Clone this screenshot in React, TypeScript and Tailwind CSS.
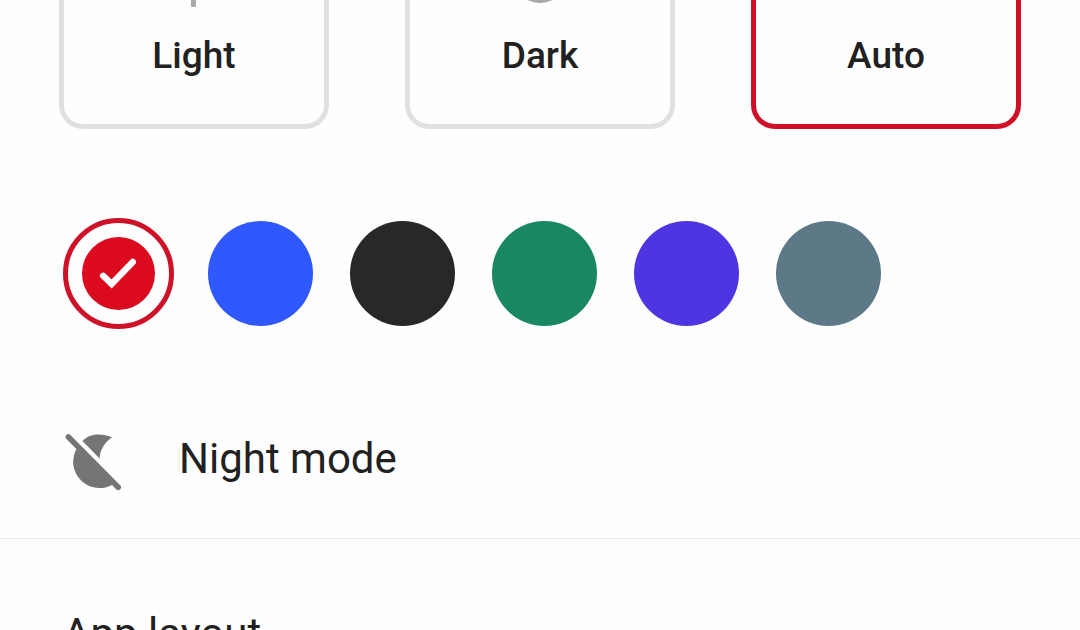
import { useState } from "react";
import type { ReactNode } from "react";

const themes: { id: string; label: string; icon: ReactNode }[] = [
  {
    id: "light",
    label: "Light",
    // lowest ray of the sun
    icon: <rect x="24" y="-10" width="5" height="17" rx="1" />,
  },
  {
    id: "dark",
    label: "Dark",
    icon: <circle cx="27" cy="-23" r="26" />,
  },
  { id: "auto", label: "Auto", icon: null },
];

const accents = [
  { id: "red", color: "bg-[#dc0a1e]" },
  { id: "blue", color: "bg-[#2f58ff]" },
  { id: "black", color: "bg-[#27282a]" },
  { id: "green", color: "bg-[#198761]" },
  { id: "purple", color: "bg-[#4e35e2]" },
  { id: "slate", color: "bg-[#5d7988]" },
];

function NightOffIcon() {
  return (
    <svg viewBox="0 0 64 64" className="size-16 shrink-0 text-[#757575]" fill="currentColor" aria-hidden="true">
      <path d="M20.4 14C26 8 36 4.8 50 10.2C42 16 38 23 37.6 31.6Z" />
      <path d="M14.2 22.3A26.4 26.4 0 0 0 50.9 57.4L16 22Z" />
      <path d="M6.4 10L56.2 60.2" stroke="currentColor" strokeWidth="5.6" strokeLinecap="round" />
    </svg>
  );
}

function CheckIcon() {
  return (
    <svg viewBox="0 0 73 73" className="size-full" fill="none" aria-hidden="true">
      <path
        d="M21.2 38.8L29.6 47L50.8 25"
        stroke="white"
        strokeWidth="6.4"
        strokeLinecap="round"
        strokeLinejoin="miter"
      />
    </svg>
  );
}

export default function App() {
  const [theme, setTheme] = useState("auto");
  const [accent, setAccent] = useState("red");

  return (
    <main className="h-screen overflow-hidden bg-[#fefefe] font-[Roboto,sans-serif] text-[#212121]">
      <div role="radiogroup" aria-label="Theme" className="flex gap-[76px] px-[59px]">
        {themes.map((item) => (
          <label
            key={item.id}
            className={`relative flex flex-1 cursor-pointer flex-col items-center rounded-b-3xl border-x-[5px] border-b-[5px] pb-11 ${
              theme === item.id ? "border-[#ce1126]" : "border-[#e0e0e0]"
            }`}
          >
            <input
              type="radio"
              name="theme"
              value={item.id}
              checked={theme === item.id}
              onChange={() => setTheme(item.id)}
              className="sr-only"
            />
            <svg viewBox="0 0 54 32" className="h-8 w-[54px] text-[#a9a9a9]" fill="currentColor" aria-hidden="true">
              {item.icon}
            </svg>
            <span className="text-[37px] leading-[48px] font-medium">{item.label}</span>
          </label>
        ))}
      </div>

      <div role="radiogroup" aria-label="Accent color" className="mt-[92px] flex gap-[37px] px-[66px]">
        {accents.map((item) => {
          const isActive = accent === item.id;
          return (
            <label
              key={item.id}
              className={`relative flex size-[105px] cursor-pointer items-center justify-center rounded-full ${
                isActive ? "outline-[5px] -outline-offset-2 outline-[#ce1126]" : item.color
              }`}
            >
              <input
                type="radio"
                name="accent"
                value={item.id}
                aria-label={item.id}
                checked={isActive}
                onChange={() => setAccent(item.id)}
                className="sr-only"
              />
              {isActive && (
                <span className={`size-[73px] rounded-full ${item.color}`}>
                  <CheckIcon />
                </span>
              )}
            </label>
          );
        })}
      </div>

      <button
        type="button"
        className="mt-[54px] flex w-full cursor-pointer items-center gap-[53px] border-b border-[#e6e6e6] px-[62px] py-[47px] text-left"
      >
        <NightOffIcon />
        <span className="text-[42px] leading-[48px]">Night mode</span>
      </button>

      <section className="px-[63px] pt-[71px] pb-16">
        <h2 className="text-[42px] leading-[48px]">App layout</h2>
      </section>
    </main>
  );
}
